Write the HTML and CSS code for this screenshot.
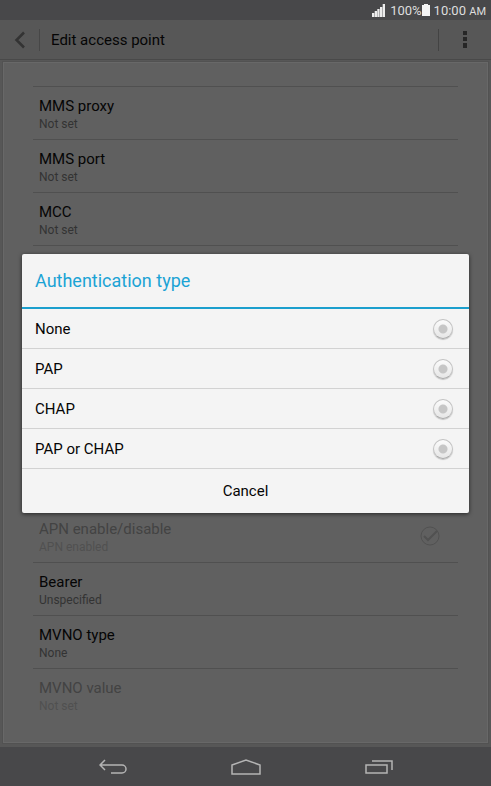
FILE: index.html
```html
<!DOCTYPE html>
<html lang="en">
<head>
  <meta charset="utf-8">
  <meta name="viewport" content="width=device-width, initial-scale=1">
  <title>Edit access point</title>
  <link rel="stylesheet" href="styles.css">
</head>
<body>
  <div class="status-bar">
    <svg class="signal" width="13" height="13" viewBox="0 0 13 13" fill="#ececec">
      <path d="M0 9h2.3v4H0zM2.7 7H5v6H2.700zM5.300 5h2.300v8H5.300zM8 3h2.300v10H8zM10.700 0H13v13h-2.300z"/>
    </svg>
    <span>100%</span>
    <svg class="battery" width="8" height="12" viewBox="0 0 8 12" fill="#f4f4f4">
      <path d="M2 0h4v1h2v11H0V1h2z"/>
    </svg>
    <span>10:00 <small>AM</small></span>
  </div>

  <header class="action-bar">
    <button class="back" type="button" aria-label="Back">
      <svg width="12" height="18" viewBox="0 0 12 18" fill="none" stroke="#333" stroke-width="2.500">
        <path d="M10 1.500L2.500 9l7.500 7.500"/>
      </svg>
    </button>
    <h1>Edit access point</h1>
    <button class="more" type="button" aria-label="More options">
      <svg width="4" height="17" viewBox="0 0 4 17" fill="#262626">
        <path d="M0 0h4v4H0zM0 6h4v4H0zM0 12h4v5H0z"/>
      </svg>
    </button>
  </header>

  <main class="content">
    <div class="panel">
      <ul class="settings">
        <li><div class="name">MMS proxy</div><div class="value">Not set</div></li>
        <li><div class="name">MMS port</div><div class="value">Not set</div></li>
        <li><div class="name">MCC</div><div class="value">Not set</div></li>
      </ul>
      <ul class="settings">
        <li class="disabled with-check">
          <label for="apn-enabled">
            <span class="name">APN enable/disable</span>
            <span class="value">APN enabled</span>
          </label>
          <span class="check">
            <input type="checkbox" id="apn-enabled" checked disabled>
            <svg width="20" height="20" viewBox="0 0 20 20" fill="none" stroke="#515151">
              <circle cx="10" cy="10" r="9"/>
              <path stroke-width="2" d="M4 10l4 4 9-9"/>
            </svg>
          </span>
        </li>
        <li><div class="name">Bearer</div><div class="value">Unspecified</div></li>
        <li><div class="name">MVNO type</div><div class="value">None</div></li>
        <li class="disabled"><div class="name">MVNO value</div><div class="value">Not set</div></li>
      </ul>
    </div>

    <div class="overlay">
      <form class="dialog" role="dialog" aria-labelledby="dialog-title">
        <h2 id="dialog-title">Authentication type</h2>
        <label class="option" for="auth-none">None <input type="radio" name="auth" id="auth-none"></label>
        <label class="option" for="auth-pap">PAP <input type="radio" name="auth" id="auth-pap"></label>
        <label class="option" for="auth-chap">CHAP <input type="radio" name="auth" id="auth-chap"></label>
        <label class="option" for="auth-both">PAP or CHAP <input type="radio" name="auth" id="auth-both"></label>
        <button class="cancel" type="button">Cancel</button>
      </form>
    </div>
  </main>

  <nav class="nav-bar">
    <button type="button" aria-label="Back">
      <svg width="28" height="16" viewBox="0 0 28 16" fill="none" stroke="#b4b4b4" stroke-width="1.500">
        <path d="M6 1L1 6l5 5M1 6h22a4 4 0 0 1 0 8H12"/>
      </svg>
    </button>
    <button type="button" aria-label="Home">
      <svg width="30" height="16" viewBox="0 0 30 16" fill="none" stroke="#b4b4b4" stroke-width="1.500">
        <path d="M1 6l14-5 14 5v9H1z"/>
      </svg>
    </button>
    <button type="button" aria-label="Recent apps">
      <svg width="28" height="16" viewBox="0 0 28 16" fill="none" stroke="#b4b4b4" stroke-width="1.500">
        <path d="M1 6h21v8H1zM7 2h20v9"/>
      </svg>
    </button>
  </nav>
</body>
</html>
```
FILE: styles.css
```css
* { box-sizing: border-box; }
body {
  margin: 0;
  min-height: 100vh;
  display: flex;
  flex-direction: column;
  background: #575757;
  color: #050505;
  font-family: Roboto, "Liberation Sans", sans-serif;
  font-size: 15px;
}
button { border: none; background: none; padding: 0; font: inherit; color: inherit; cursor: pointer; }
svg { display: block; }

.status-bar {
  display: flex;
  align-items: center;
  justify-content: flex-end;
  height: 20px;
  padding: 0 5px;
  background: #48484a;
  color: #dedede;
  font-size: 13px;
}
.status-bar small { font-size: 11px; }
.signal { margin-right: 5px; }
.battery { margin-right: 4px; }

.action-bar {
  display: flex;
  align-items: center;
  height: 40px;
  border-bottom: 1px solid #494949;
}
.action-bar h1 { flex: 1; margin: 0; padding-left: 11px; font-size: 15px; font-weight: normal; }
.back, .more { display: flex; align-items: center; height: 22px; }
.back { width: 40px; padding-left: 14px; border-right: 1px solid #474747; }
.more { width: 53px; justify-content: center; border-left: 1px solid #434343; }

.content { position: relative; flex: 1; display: flex; padding: 2px 3px 4px; }
.panel {
  flex: 1;
  display: flex;
  flex-direction: column;
  justify-content: space-between;
  padding: 23px 29px 21px;
  background: #606060;
  border: 1px solid #686868;
  outline: 1px solid #525252;
}
.settings { margin: 0; padding: 0; list-style: none; }
.settings:first-child { border-bottom: 1px solid #505050; }
.settings li {
  height: 53px;
  padding: 9px 6px 0;
  border-top: 1px solid #505050;
}
.name { display: block; line-height: 20px; }
.value { display: block; line-height: 16px; font-size: 12px; color: #333; }
.disabled .name { color: #434343; }
.disabled .value { color: #505050; }
.with-check { display: flex; justify-content: space-between; }
.check { position: relative; width: 20px; height: 20px; margin: 7px 12px 0 0; }
.check input { position: absolute; margin: 0; width: 20px; height: 20px; opacity: 0; }

.overlay {
  position: absolute;
  inset: 0;
  top: -40px;
  display: flex;
  align-items: center;
  padding: 0 22px;
}
.dialog {
  width: 100%;
  background: #f4f4f4;
  border-radius: 2px;
  box-shadow: 0 1px 4px rgba(0, 0, 0, 0.6);
  overflow: hidden;
}
.dialog h2 {
  margin: 0;
  padding: 0 13px;
  border-bottom: 2px solid #1b9fcd;
  line-height: 53px;
  font-size: 18px;
  font-weight: normal;
  color: #1ba3d4;
}
.option {
  display: flex;
  align-items: center;
  justify-content: space-between;
  height: 40px;
  padding: 0 16px 0 13px;
  border-bottom: 1px solid #d2d2d2;
}
.option input {
  appearance: none;
  width: 20px;
  height: 20px;
  margin: 0;
  border: 1px solid #c2c2c2;
  border-bottom-color: #a8a8a8;
  border-radius: 50%;
  background: radial-gradient(circle, #c6c6c6 4px, transparent 5px), linear-gradient(#fbfbfb, #e6e6e6);
  box-shadow: 0 1px 1px rgba(0, 0, 0, 0.2);
}
.option input:checked { background: radial-gradient(circle, #1b9fcd 4px, transparent 5px), linear-gradient(#fbfbfb, #e6e6e6); }
.cancel { display: block; width: 100%; height: 44px; }

.nav-bar {
  display: flex;
  align-items: center;
  justify-content: center;
  gap: 104px;
  height: 39px;
  background: #48484a;
}
```
